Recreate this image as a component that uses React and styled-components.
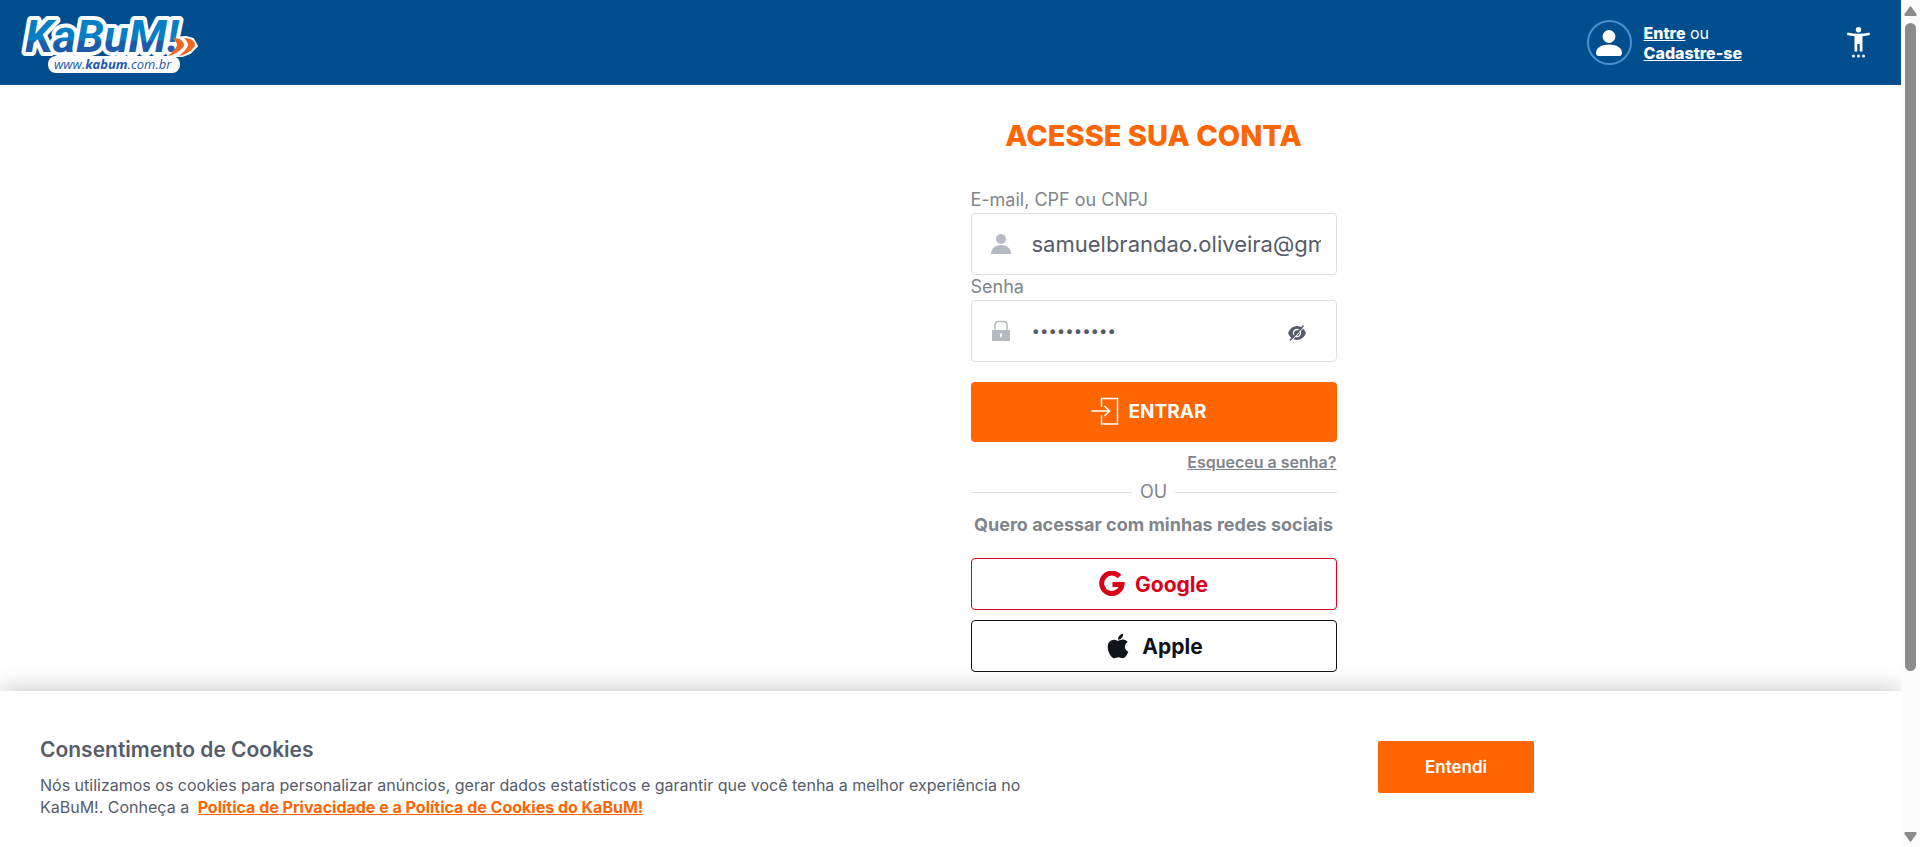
import React from "react";
import styled, { createGlobalStyle } from "styled-components";
import { FaApple } from "react-icons/fa";

const Global = createGlobalStyle`
  *, *::before, *::after { box-sizing: border-box; }
  body { margin: 0; background: #fff; font-family: Inter, "Open Sans", sans-serif; color: #565c69; }
  h1, h2, p { margin: 0; }
  button, input { font: inherit; }
  svg { display: block; flex: none; }
`;

const Frame = styled.div`
  display: flex;
  height: 100vh;
`;
const Page = styled.div`
  flex: 1;
  min-width: 0;
  display: flex;
  flex-direction: column;
`;
const Header = styled.header`
  display: flex;
  align-items: center;
  height: 85px;
  flex: none;
  padding: 0 31px 0 20px;
  background: #004e8e;
`;
const LogoLink = styled.a`
  margin-right: auto;
`;
const Account = styled.div`
  display: flex;
  align-items: center;
  gap: 12px;
  margin-right: 105px;
  color: #fff;
  font-size: 16px;
  line-height: 20px;
`;
const Avatar = styled.span`
  display: grid;
  place-items: center;
  width: 45px;
  height: 45px;
  border: 2px solid #4a90cf;
  border-radius: 50%;
`;
const AccountLink = styled.a`
  color: #fff;
  font-weight: 800;
  text-decoration: underline;
`;
const IconButton = styled.button`
  display: grid;
  place-items: center;
  padding: 0;
  border: 0;
  background: none;
  cursor: pointer;
`;

const Main = styled.main`
  flex: 1;
  min-height: 0;
  display: grid;
  grid-template-columns: 1fr 1fr;
  column-gap: 40px;
`;
const Form = styled.form`
  grid-column: 2;
  width: 366px;
  display: flex;
  flex-direction: column;
  padding-top: 31px;
`;
const Title = styled.h1`
  color: #ff6500;
  font-size: 29px;
  line-height: 40px;
  font-weight: 800;
  text-align: center;
  white-space: nowrap;
  margin-bottom: 32px;
`;
const Label = styled.label`
  height: 25px;
  color: #7f858d;
  font-size: 18px;
  line-height: 24px;
`;
const Field = styled.div`
  display: flex;
  align-items: center;
  height: 62px;
  padding: 0 15px 0 18px;
  border: 1px solid #dedfe3;
  border-radius: 4px;
  color: #565c69;
`;
const Input = styled.input`
  flex: 1;
  min-width: 0;
  margin-left: 20px;
  padding: 0;
  border: 0;
  outline: 0;
  background: none;
  color: #565c69;
  font-size: ${(p) => (p.type === "password" ? 15 : 22)}px;
  line-height: 28px;
`;
const Toggle = styled(IconButton)`
  margin-right: 15px;
  padding-top: 4px;
`;
const Submit = styled.button`
  display: flex;
  align-items: center;
  justify-content: center;
  gap: 10px;
  height: 60px;
  margin-top: 20px;
  padding: 0 10px 2px 0;
  border: 0;
  border-radius: 4px;
  background: #ff6500;
  color: #fff;
  font-size: 19px;
  font-weight: 700;
`;
const Forgot = styled.a`
  align-self: flex-end;
  margin-top: 10px;
  color: #7f858d;
  font-size: 16px;
  line-height: 20px;
  font-weight: 600;
  text-decoration: underline;
`;
const Divider = styled.div`
  display: flex;
  align-items: center;
  gap: 8px;
  margin-top: 8px;
  color: #7f858d;
  font-size: 18px;
  line-height: 24px;
  &::before, &::after { content: ""; flex: 1; height: 1px; background: #dedfe3; }
`;
const SocialText = styled.p`
  margin: 9px 0 21px;
  color: #7f858d;
  font-size: 18px;
  line-height: 24px;
  font-weight: 700;
  text-align: center;
  white-space: nowrap;
`;
const Social = styled.button`
  display: flex;
  align-items: center;
  justify-content: center;
  gap: 10px;
  height: 52px;
  flex: none;
  margin-bottom: 10px;
  border: 1px solid currentColor;
  border-radius: 4px;
  background: #fff;
  color: ${(p) => p.$color};
  font-size: 21px;
  font-weight: 700;
`;

const Cookies = styled.section`
  position: relative;
  flex: none;
  display: flex;
  align-items: flex-start;
  justify-content: space-between;
  height: 156px;
  padding: 44px 367px 0 40px;
  background: #fff;
  box-shadow: 0 0 24px rgba(0, 0, 0, 0.25);
  clip-path: inset(-40px 0 0 0);
`;
const CookieTitle = styled.h2`
  font-size: 21px;
  line-height: 30px;
  font-weight: 600;
`;
const CookieText = styled.p`
  margin-top: 9px;
  max-width: 1000px;
  font-size: 16px;
  line-height: 22px;
`;
const PolicyLink = styled.a`
  margin-left: 4px;
  color: #ff6500;
  font-weight: 700;
  text-decoration: underline;
`;
const Accept = styled.button`
  width: 156px;
  height: 52px;
  margin: 6px 0 0;
  border: 0;
  border-radius: 2px;
  background: #ff6500;
  color: #fff;
  font-size: 17px;
  font-weight: 600;
`;

const Scrollbar = styled.div`
  flex: none;
  display: flex;
  flex-direction: column;
  align-items: center;
  width: 19px;
  padding: 6px 0 5px;
  background: #fcfcfc;
`;
const Thumb = styled.div`
  width: 11px;
  height: 648px;
  margin: 7px 0 auto;
  border-radius: 6px;
  background: #8b8b8b;
`;

const Logo = () => (
  <svg width="180" height="70" viewBox="20 8 180 70" role="img" aria-label="KaBuM!">
    <defs>
      <linearGradient id="ink" x1="0" y1="0" x2="0" y2="1">
        <stop offset="0.56" stopColor="#087fc4" />
        <stop offset="0.6" stopColor="#1c5bab" />
      </linearGradient>
    </defs>
    <rect x="48" y="56" width="132" height="17" rx="8" fill="#fff" />
    <path d="M172 38 L186 37 L193 39 L197 46 L190 53 L182 56 L168 56 Z" fill="#fff" stroke="#fff" strokeWidth="2" strokeLinejoin="round" />
    <text x="25" y="52" fontFamily="Roboto, 'Liberation Sans'" fontSize="45" fontWeight="700" fontStyle="italic" fill="url(#ink)" stroke="#fff" strokeWidth="8" strokeLinejoin="round" paintOrder="stroke">KaBuM!</text>
    <path d="M173 38 Q184 38 184 46 Q178 54 168 56 Q177 48 177 45 Q177 42 173 38 Z M184 38 Q195 38 195 46 Q189 54 179 56 Q188 48 188 45 Q188 42 184 38 Z" fill="#f26522" />
    <text x="54" y="69" fontFamily="'Open Sans'" fontSize="13" fontStyle="italic" fill="#1c5bab">www.<tspan fontWeight="700">kabum</tspan>.com.br</text>
  </svg>
);
const Person = ({ w, h }) => (
  <svg width={w} height={h} viewBox="0 0 26 26" fill="currentColor" aria-hidden="true">
    <circle cx="13" cy="6.5" r="6.4" />
    <path d="M0 23c0-5 5-8.500 13-8.500S26 18 26 23c0 2-1 3-3 3H3c-2 0-3-1-3-3Z" />
  </svg>
);

export default function App() {
  return (
    <Frame>
      <Global />
      <Page>
        <Header>
          <LogoLink href="#"><Logo /></LogoLink>
          <Account>
            <Avatar><Person w={26} h={26} /></Avatar>
            <div>
              <AccountLink href="#">Entre</AccountLink> ou<br />
              <AccountLink href="#">Cadastre-se</AccountLink>
            </div>
          </Account>
          <IconButton type="button" aria-label="Acessibilidade">
            <svg width="23" height="31" viewBox="0 0 23 31" fill="#fff">
              <circle cx="11.500" cy="2.700" r="2.700" />
              <path d="M0.500 5.500Q11.500 8 22.500 5.500L23 8Q19 9 15.500 9.300V24.500H12.700V17H10.300V24.500H7.500V9.300Q4 9 0 8Z" />
              <circle cx="6.500" cy="29" r="1.500" /><circle cx="11.500" cy="29" r="1.500" /><circle cx="16.500" cy="29" r="1.500" />
            </svg>
          </IconButton>
        </Header>
        <Main>
          <Form onSubmit={(e) => e.preventDefault()}>
            <Title>ACESSE SUA CONTA</Title>
            <Label htmlFor="login">E-mail, CPF ou CNPJ</Label>
            <Field>
              <svg width="22" height="22" viewBox="0 0 22 22" fill="#b5b9c1" aria-hidden="true">
                <circle cx="11" cy="6" r="5" /><path d="M1 21c0-5.500 4-9 10-9s10 3.500 10 9Z" />
              </svg>
              <Input id="login" type="text" defaultValue="samuelbrandao.oliveira@gm" />
            </Field>
            <Label htmlFor="password">Senha</Label>
            <Field>
              <svg width="22" height="22" viewBox="0 0 22 22" fill="#b5b9c1" aria-hidden="true">
                <path d="M5 10V5q0-3.500 3.500-3.500h5Q17 1.500 17 5v5" fill="none" stroke="#b5b9c1" strokeWidth="1.500" />
                <path fillRule="evenodd" d="M2 10h18v11H2Z M10 13.500v2l.5 2h1l.5-2v-2Z" />
              </svg>
              <Input id="password" type="password" defaultValue="abcdefghij" />
              <Toggle type="button" aria-label="Mostrar senha">
                <svg width="18" height="16" viewBox="0 0 18 16">
                  <path d="M0 8Q3 1 9 1T18 8Q15 15 9 15T0 8Z" fill="#565c69" />
                  <circle cx="9" cy="8" r="3.500" fill="none" stroke="#fff" strokeWidth="1.300" />
                  <path d="M3.300 16.200L17 1" stroke="#fff" strokeWidth="1" />
                  <path d="M2 15.500L15.500 0.500" stroke="#565c69" strokeWidth="1.500" />
                </svg>
              </Toggle>
            </Field>
            <Submit type="submit">
              <svg width="28" height="28" viewBox="0 0 28 28" fill="none" stroke="#fff" strokeWidth="1.500" aria-hidden="true">
                <path d="M10.500 10V1.500H26.500V27H10.500V18.500M0.500 14H18.500M13.500 9L18.500 14L13.500 19" />
              </svg>
              ENTRAR
            </Submit>
            <Forgot href="#">Esqueceu a senha?</Forgot>
            <Divider>OU</Divider>
            <SocialText>Quero acessar com minhas redes sociais</SocialText>
            <Social type="button" $color="#d9001b">
              <svg width="26" height="26" viewBox="0 0 26 26" fill="none" stroke="currentColor" strokeWidth="5" aria-hidden="true">
                <path d="M20.500 5.500A10.200 10.200 0 1 0 23 13.500H13.500" />
              </svg>
              Google
            </Social>
            <Social type="button" $color="#10131a"><FaApple size={28} />Apple</Social>
          </Form>
        </Main>
        <Cookies aria-label="Consentimento de Cookies">
          <div>
            <CookieTitle>Consentimento de Cookies</CookieTitle>
            <CookieText>
              Nós utilizamos os cookies para personalizar anúncios, gerar dados estatísticos e garantir que você tenha a melhor experiência no KaBuM!. Conheça a{" "}
              <PolicyLink href="#">Política de Privacidade e a Política de Cookies do KaBuM!</PolicyLink>
            </CookieText>
          </div>
          <Accept type="button">Entendi</Accept>
        </Cookies>
      </Page>
      <Scrollbar aria-hidden="true">
        <svg width="13" height="10" viewBox="0 0 13 10" fill="#8b8b8b"><path d="M5.500 1Q6.500-.5 7.500 1L12.500 8Q13 10 11.500 10H1.500Q0 10 .5 8Z" /></svg>
        <Thumb />
        <svg width="13" height="10" viewBox="0 0 13 10" fill="#8b8b8b"><path d="M5.500 9Q6.500 10.500 7.500 9L12.500 2Q13 0 11.500 0H1.500Q0 0 .5 2Z" /></svg>
      </Scrollbar>
    </Frame>
  );
}
